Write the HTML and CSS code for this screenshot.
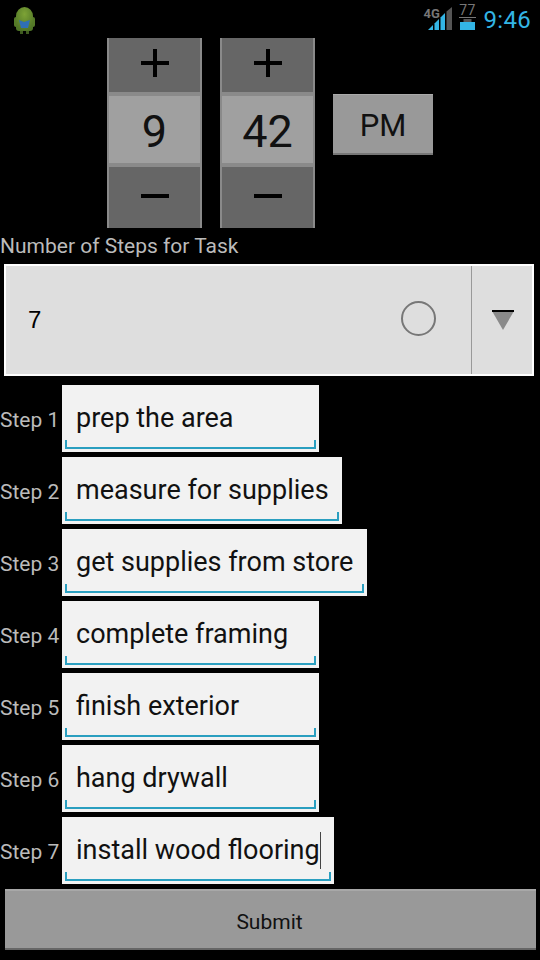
FILE: index.html
```html
<!DOCTYPE html>
<html lang="en">
<head>
  <meta charset="UTF-8">
  <meta name="viewport" content="width=device-width, initial-scale=1.0">
  <title>Task Steps</title>
  <link rel="stylesheet" href="styles.css">
</head>
<body>
  <!-- Status Bar -->
  <div class="status-bar">
    <svg class="app-icon" width="24" height="28" viewBox="0 0 24 28">
      <defs>
        <radialGradient id="skin" cx="0.5" cy="0.3" r="0.7">
          <stop offset="0" stop-color="#7da336"/>
          <stop offset="1" stop-color="#4f7426"/>
        </radialGradient>
      </defs>
      <rect x="1" y="11" width="4" height="10" rx="2" fill="#557a28"/>
      <rect x="18" y="11" width="4" height="10" rx="2" fill="#557a28"/>
      <rect x="7" y="22" width="3" height="6" fill="#3f5a20"/>
      <rect x="13" y="22" width="3" height="6" fill="#3f5a20"/>
      <path d="M3 10a8.500 9 0 0 1 17 0v12a3 3 0 0 1-3 3h-11a3 3 0 0 1-3-3z" fill="url(#skin)"/>
      <path d="M6 14l5 2 6-2-2 8h-7z" fill="#2f6fb4"/>
    </svg>
    <div class="status-right">
      <div class="signal">
        <span class="net-label">4G</span>
        <svg width="24" height="23" viewBox="0 0 24 23">
          <path d="M0 23L5 18V23Z" fill="#33b5e5"/>
          <path d="M6.500 16.500L11 12V23H6.500Z" fill="#33b5e5"/>
          <path d="M12.500 10.500L17 6V23H12.500Z" fill="#33b5e5"/>
          <path d="M18.500 4.500L24 0V23H18.500Z" fill="#555"/>
        </svg>
      </div>
      <div class="battery">
        <span class="battery-level">77</span>
        <svg width="15" height="11" viewBox="0 0 15 11">
          <rect x="3.500" y="0" width="8" height="3" fill="#555"/>
          <rect x="0" y="3" width="15" height="8" fill="#33b5e5"/>
        </svg>
      </div>
      <span class="clock">9:46</span>
    </div>
  </div>

  <!-- Time Picker -->
  <div class="time-row">
    <div class="picker">
      <div class="picker-btn picker-up">
        <svg width="28" height="28" viewBox="0 0 28 28"><path d="M0 12h28v4H0zM12 0h4v28h-4z" fill="#000"/></svg>
      </div>
      <div class="picker-value">9</div>
      <div class="picker-btn picker-down">
        <svg width="28" height="4" viewBox="0 0 28 4"><path d="M0 0h28v4H0z" fill="#000"/></svg>
      </div>
    </div>
    <div class="picker">
      <div class="picker-btn picker-up">
        <svg width="28" height="28" viewBox="0 0 28 28"><path d="M0 12h28v4H0zM12 0h4v28h-4z" fill="#000"/></svg>
      </div>
      <div class="picker-value">42</div>
      <div class="picker-btn picker-down">
        <svg width="28" height="4" viewBox="0 0 28 4"><path d="M0 0h28v4H0z" fill="#000"/></svg>
      </div>
    </div>
    <div class="ampm">PM</div>
  </div>

  <!-- Steps Count -->
  <div class="count-label">Number of Steps for Task</div>
  <div class="spinner">
    <div class="spinner-main">
      <span class="spinner-value">7</span>
      <span class="radio"></span>
    </div>
    <div class="spinner-arrow">
      <svg width="22" height="20" viewBox="0 0 22 20">
        <path d="M0 1h22L11 20z" fill="#8a8a8a"/>
        <path d="M0 0h22v2H0z" fill="#000"/>
      </svg>
    </div>
  </div>

  <!-- Steps -->
  <div class="steps">
    <div class="step"><span class="step-label">Step 1</span><div class="step-input">prep the area</div></div>
    <div class="step"><span class="step-label">Step 2</span><div class="step-input">measure for supplies</div></div>
    <div class="step"><span class="step-label">Step 3</span><div class="step-input">get supplies from store</div></div>
    <div class="step"><span class="step-label">Step 4</span><div class="step-input">complete framing</div></div>
    <div class="step"><span class="step-label">Step 5</span><div class="step-input">finish exterior</div></div>
    <div class="step"><span class="step-label">Step 6</span><div class="step-input">hang drywall</div></div>
    <div class="step"><span class="step-label">Step 7</span><div class="step-input"><span class="caret">install wood flooring</span></div></div>
  </div>

  <div class="submit">Submit</div>
</body>
</html>
```

FILE: styles.css
```css
* {
  margin: 0;
  padding: 0;
  box-sizing: border-box;
}

body {
  font-family: Roboto, "Liberation Sans", sans-serif;
  background-color: #000;
  color: #000;
  width: 540px;
  height: 960px;
  overflow: hidden;
}

/* Status Bar */
.status-bar {
  height: 38px;
  display: flex;
  justify-content: space-between;
  padding: 4px 9px 0 13px;
}

.app-icon {
  margin-top: 2px;
  filter: blur(0.6px);
}

.status-right {
  display: flex;
  align-items: flex-start;
}

.signal {
  position: relative;
  width: 30px;
  height: 26px;
  display: flex;
  justify-content: flex-end;
  align-items: flex-end;
}

.net-label,
.battery-level {
  font-size: 13px;
  font-weight: 700;
  color: #777;
  line-height: 13px;
}

.net-label {
  position: absolute;
  left: 2px;
  top: 3px;
}

.battery {
  width: 16px;
  margin-left: 8px;
  height: 26px;
  display: flex;
  flex-direction: column;
  align-items: center;
  justify-content: flex-end;
  line-height: 0;
}

.battery-level {
  font-weight: 400;
  font-size: 14px;
  margin-bottom: 1px;
  letter-spacing: 0.5px;
  border-bottom: 1px solid #777;
}

.clock {
  color: #33b5e5;
  font-size: 24px;
  line-height: 32px;
  margin-left: 8px;
  letter-spacing: 0.3px;
}

/* Time Picker */
.time-row {
  display: flex;
  align-items: flex-start;
  gap: 18px;
  padding-left: 107px;
}

.picker {
  width: 95px;
  height: 190px;
  background-color: #8a8a8a;
  padding: 0 2px;
  display: flex;
  flex-direction: column;
  gap: 4px;
}

.picker-btn {
  background-color: #666;
  display: flex;
  align-items: center;
  justify-content: center;
}

.picker-up {
  height: 54px;
  padding-bottom: 4px;
}

.picker-down {
  height: 61px;
  padding-bottom: 3px;
}

.picker-value {
  height: 67px;
  background-color: #a0a0a0;
  font-size: 45px;
  line-height: 71px;
  text-align: center;
  color: #111;
}

.ampm {
  width: 100px;
  height: 61px;
  margin-top: 56px;
  padding-top: 4px;
  background-color: #999;
  border-top: 1px solid #aaa;
  border-bottom: 2px solid #777;
  font-size: 31px;
  line-height: 54px;
  text-align: center;
  color: #111;
}

/* Steps Count */
.count-label {
  height: 36px;
  font-size: 21px;
  line-height: 36px;
  color: #bbb;
}

.spinner {
  width: 530px;
  height: 112px;
  margin-left: 4px;
  background-color: #dedede;
  border: 2px solid #fff;
  display: flex;
}

.spinner-main {
  flex: 1;
  display: flex;
  align-items: center;
  justify-content: space-between;
  padding: 0 35px 0 22px;
  border-right: 1px solid #999;
}

.spinner-value {
  font-family: "Liberation Sans", sans-serif;
  font-size: 24px;
}

.radio {
  width: 35px;
  height: 35px;
  margin-bottom: 3px;
  border: 2px solid #777;
  border-radius: 50%;
}

.spinner-arrow {
  width: 60px;
  padding-left: 1px;
  display: flex;
  align-items: center;
  justify-content: center;
}

/* Steps */
.steps {
  margin-top: 9px;
  display: flex;
  flex-direction: column;
  gap: 5px;
}

.step {
  display: flex;
  align-items: center;
  height: 67px;
}

.step-label {
  width: 62px;
  padding-top: 3px;
  font-size: 21px;
  color: #bbb;
  white-space: nowrap;
}

.step-input {
  position: relative;
  min-width: 257px;
  height: 67px;
  padding: 0 13.500px 0 14px;
  background-color: #f2f2f2;
  font-size: 27px;
  line-height: 66px;
  color: #111;
  white-space: nowrap;
}

/* Blue bracket under the field */
.step-input::after {
  content: "";
  position: absolute;
  left: 3px;
  right: 3px;
  bottom: 3px;
  height: 7px;
  border: 2px solid #2a9fc0;
  border-top: none;
}

.caret {
  display: inline-block;
  height: 37px;
  line-height: 37px;
  border-right: 1px solid #444;
}

.submit {
  width: 531px;
  height: 61px;
  margin: 5px 0 0 5px;
  padding-right: 2px;
  background-color: #999;
  border-top: 2px solid #a8a8a8;
  border-bottom: 2px solid #666;
  font-size: 21px;
  line-height: 62px;
  text-align: center;
  color: #111;
}
```
